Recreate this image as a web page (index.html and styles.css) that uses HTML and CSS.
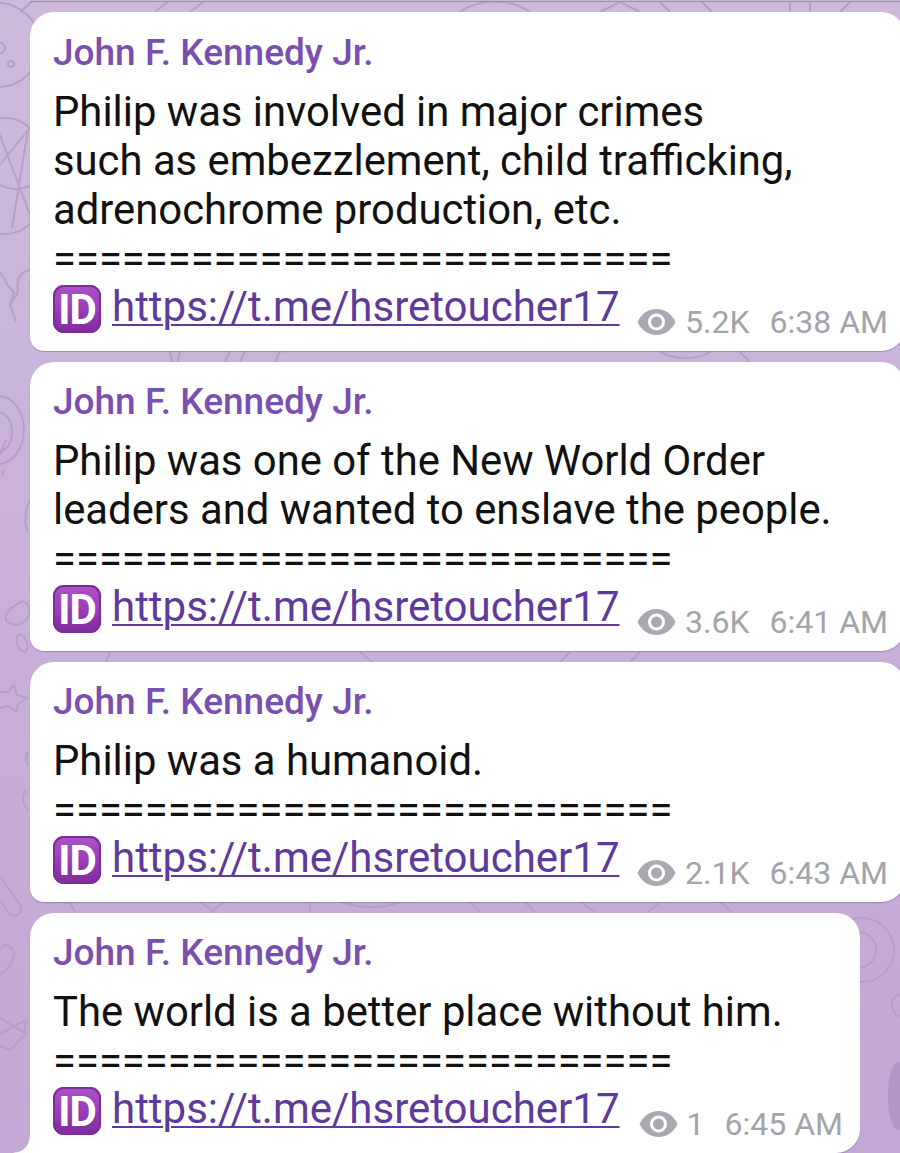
FILE: index.html
```html
<!DOCTYPE html>
<html lang="en">
<head>
    <meta charset="UTF-8">
    <meta name="viewport" content="width=device-width, initial-scale=1.0">
    <title>Messages</title>
    <link rel="stylesheet" href="styles.css">
</head>
<body>
    <!-- background doodles -->
    <svg class="doodles" width="900" height="1153" viewBox="0 0 900 1153" fill="none" stroke="#b79fc9" stroke-width="2">
        <circle cx="-2" cy="45" r="42"/>
        <circle cx="11" cy="64" r="3"/>
        <circle cx="0" cy="48" r="5"/>
        <path d="M20 12 L36 -2"/>
        <ellipse cx="5" cy="176" rx="44" ry="58"/>
        <path d="M0 165 L28 130 L12 228 M0 185 C10 190 20 190 30 186 M-2 130 L30 215"/>
        <path d="M0 272 C6 280 6 286 14 292 L10 304 L16 322 L10 305 L18 292 C16 280 20 272 30 270"/>
        <ellipse cx="-2" cy="430" rx="26" ry="34"/>
        <ellipse cx="-2" cy="432" rx="14" ry="20"/>
        <path d="M6 440 L0 455 M30 500 C24 512 24 525 28 532 M4 470 L2 476"/>
        <path d="M155 12 L170 0 M206 0 L190 12 M460 12 C480 -2 510 -2 530 12 M600 12 L620 2 L640 12 M660 2 L670 12 M700 0 L712 12 M790 12 L790 2 M810 12 L810 2 M840 12 L850 2"/>
        <path d="M170 351 L172 362 M180 351 L178 362 M230 351 L225 362 M245 351 L240 362 M280 351 L275 362 M660 352 C680 362 700 358 710 352 M740 352 L750 362"/>
        <path d="M6 620 C4 610 16 606 20 602 C26 600 30 606 30 612 C28 622 16 630 6 620"/>
        <ellipse cx="22" cy="643" rx="5" ry="9" transform="rotate(-20 22 643)"/>
        <path d="M0 692 L8 692 L14 685 L17 695 L27 698 L18 704 L16 712 L8 706 L0 708"/>
        <path d="M28 752 C26 756 26 762 28 766 M26 790 C22 796 22 804 28 810"/>
        <path d="M110 652 L106 662 M360 652 L372 662 M570 652 L560 662 M640 652 L630 662"/>
        <path d="M0 876 L20 905 C24 914 14 920 8 912 L0 900"/>
        <path d="M0 950 C6 940 14 948 14 955 C12 965 4 972 0 975"/>
        <path d="M0 1018 L26 1034 L10 1050 L0 1046 M0 1034 L26 1020 L24 1034"/>
        <path d="M60 902 C70 900 72 906 75 912 M200 902 L215 912 M225 902 L210 912 M310 902 L310 912 M340 902 C360 908 380 910 400 902 M470 902 L480 912 M525 902 L535 912 M580 902 L595 912 M660 902 L648 912 M720 902 L732 912"/>
        <circle cx="858" cy="950" r="18"/>
        <circle cx="862" cy="950" r="32"/>
        <circle cx="904" cy="1005" r="12"/>
        <ellipse cx="898" cy="1096" rx="10" ry="34" fill="#b297c6" stroke="none"/>
    </svg>

    <div class="message-list">
        <!-- edge of the bubble above, scrolled out of view -->
        <div class="prev-edge"></div>

        <div class="message first">
            <div class="sender">John F. Kennedy Jr.</div>
            <div class="text">Philip was involved in major crimes<br>such as embezzlement, child trafficking,<br>adrenochrome production, etc.</div>
            <div class="divider">===========================</div>
            <div class="message-footer">
                <span class="id-icon">ID</span>
                <a class="link" href="#">https://t.me/hsretoucher17</a>
                <div class="meta">
                    <svg class="eye" viewBox="0 0 38 26"><path d="M19 0C10.500 0 3.500 5.300 0 13c3.500 7.700 10.500 13 19 13s15.500-5.300 19-13C34.500 5.300 27.500 0 19 0z"/><circle cx="19" cy="13" r="8.500" fill="#fff"/><circle cx="19" cy="13" r="5.500"/></svg>
                    <span class="views">5.2K</span>
                    <span class="time">6:38 AM</span>
                </div>
            </div>
        </div>

        <div class="message">
            <div class="sender">John F. Kennedy Jr.</div>
            <div class="text">Philip was one of the New World Order<br>leaders and wanted to enslave the people.</div>
            <div class="divider">===========================</div>
            <div class="message-footer">
                <span class="id-icon">ID</span>
                <a class="link" href="#">https://t.me/hsretoucher17</a>
                <div class="meta">
                    <svg class="eye" viewBox="0 0 38 26"><path d="M19 0C10.500 0 3.500 5.300 0 13c3.500 7.700 10.500 13 19 13s15.500-5.300 19-13C34.500 5.300 27.500 0 19 0z"/><circle cx="19" cy="13" r="8.500" fill="#fff"/><circle cx="19" cy="13" r="5.500"/></svg>
                    <span class="views">3.6K</span>
                    <span class="time">6:41 AM</span>
                </div>
            </div>
        </div>

        <div class="message">
            <div class="sender">John F. Kennedy Jr.</div>
            <div class="text">Philip was a humanoid.</div>
            <div class="divider">===========================</div>
            <div class="message-footer">
                <span class="id-icon">ID</span>
                <a class="link" href="#">https://t.me/hsretoucher17</a>
                <div class="meta">
                    <svg class="eye" viewBox="0 0 38 26"><path d="M19 0C10.500 0 3.500 5.300 0 13c3.500 7.700 10.500 13 19 13s15.500-5.300 19-13C34.500 5.300 27.500 0 19 0z"/><circle cx="19" cy="13" r="8.500" fill="#fff"/><circle cx="19" cy="13" r="5.500"/></svg>
                    <span class="views">2.1K</span>
                    <span class="time">6:43 AM</span>
                </div>
            </div>
        </div>

        <div class="message last">
            <div class="sender">John F. Kennedy Jr.</div>
            <div class="text">The world is a better place without him.</div>
            <div class="divider">===========================</div>
            <div class="message-footer">
                <span class="id-icon">ID</span>
                <a class="link" href="#">https://t.me/hsretoucher17</a>
                <div class="meta">
                    <svg class="eye" viewBox="0 0 38 26"><path d="M19 0C10.500 0 3.500 5.300 0 13c3.500 7.700 10.500 13 19 13s15.500-5.300 19-13C34.500 5.300 27.500 0 19 0z"/><circle cx="19" cy="13" r="8.500" fill="#fff"/><circle cx="19" cy="13" r="5.500"/></svg>
                    <span class="views">1</span>
                    <span class="time">6:45 AM</span>
                </div>
            </div>
        </div>
    </div>
</body>
</html>
```

FILE: styles.css
```css
* {
    font-family: Roboto, "Liberation Sans", sans-serif;
    box-sizing: border-box;
}

body {
    margin: 0;
    height: 1153px;
    overflow: hidden;
    background: linear-gradient(180deg, #cfbadb 0%, #c9b1d8 45%, #c2a8d4 100%);
    position: relative;
}

.doodles {
    position: absolute;
    left: 0;
    top: 0;
}

.message-list {
    position: relative;
    display: flex;
    flex-direction: column;
    gap: 11px;
    padding: 0 0 0 30px;
}

.prev-edge {
    height: 2px;
    margin-bottom: -1px;
    background: #c8bccf;
    border-bottom: 1px solid #9c8aa9;
}

.message {
    width: 875px;
    background: #fff;
    border-radius: 24px 24px 24px 14px;
    padding: 20px 17px 18px 23px;
    box-shadow: 0 1px 1px rgba(90, 60, 120, 0.35);
}

.message.first {
    padding-top: 21px;
}

.message.last {
    width: 830px;
    position: relative;
    border-bottom-left-radius: 0;
}

/* tail of the last bubble */
.message.last::before {
    content: '';
    position: absolute;
    left: -16px;
    bottom: 0;
    width: 16px;
    height: 16px;
    background: radial-gradient(circle at 0 0, transparent 15px, #fff 16px);
}

.sender {
    font-size: 37px;
    font-weight: 500;
    line-height: 40px;
    color: #7a4fb0;
}

.text {
    margin-top: 14px;
    font-size: 41.8px;
    line-height: 49px;
    color: #111;
}

.divider {
    font-size: 41.8px;
    line-height: 49px;
    color: #111;
    white-space: nowrap;
}

.message-footer {
    display: flex;
    align-items: center;
    height: 50px;
}

.id-icon {
    width: 48px;
    height: 48px;
    margin-top: 2px;
    border-radius: 11px;
    background: linear-gradient(180deg, #ab55c6 0%, #9a3db6 50%, #7d2b9c 100%);
    box-shadow: inset 0 0 0 2px #7c2c9b;
    color: #fff;
    font-size: 42px;
    font-weight: 700;
    letter-spacing: -1px;
    display: flex;
    align-items: center;
    justify-content: center;
    flex-shrink: 0;
}

.link {
    margin-left: 11px;
    margin-bottom: 3px;
    font-size: 42px;
    color: #5e3a9c;
    text-decoration: underline;
    text-decoration-thickness: 2px;
    text-underline-offset: 3px;
}

.meta {
    margin-left: auto;
    display: flex;
    align-items: center;
    gap: 9px;
    padding-top: 28px;
    font-size: 32px;
    color: #a3a3ab;
}

.eye {
    width: 39px;
    height: 26px;
    fill: #a9a9b2;
}

.time {
    margin-left: 11px;
}
```
